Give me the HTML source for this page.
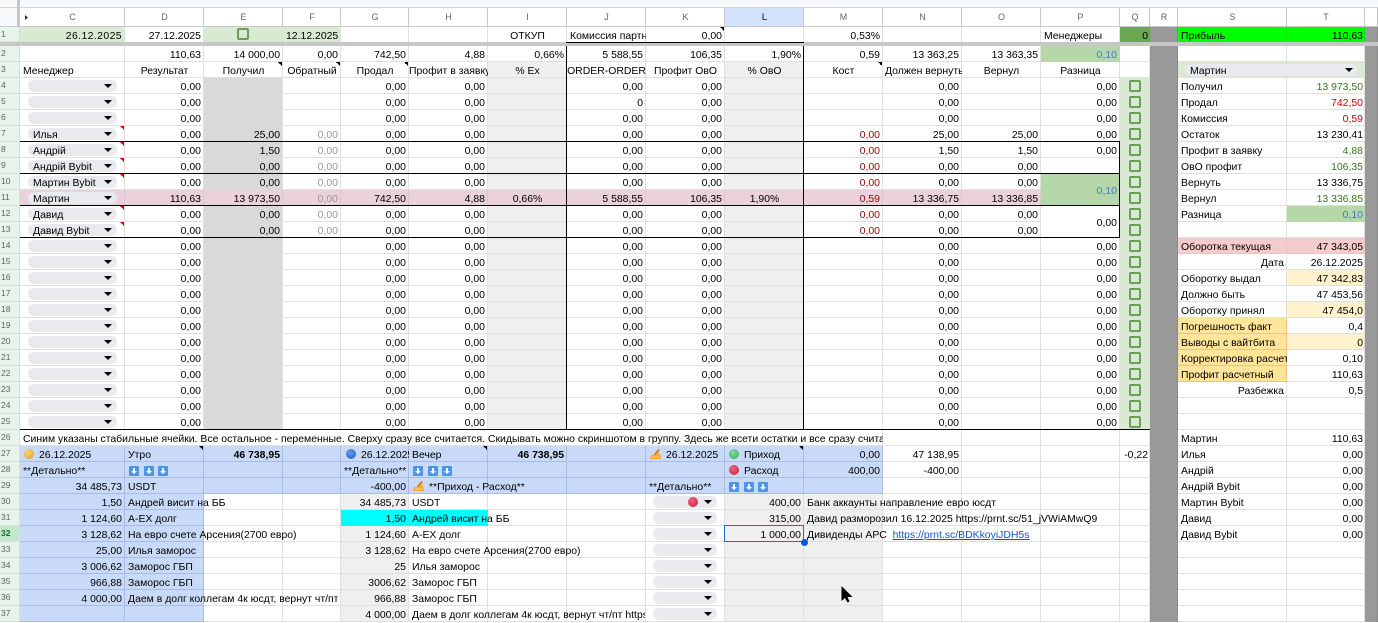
<!DOCTYPE html>
<html><head><meta charset="utf-8"><title>Sheet</title>
<style>
html,body{margin:0;padding:0;width:1378px;height:623px;overflow:hidden;background:#fff}
body{position:relative;font:10.45px/12px "Liberation Sans","Noto Sans CJK SC",sans-serif;color:#000}
table{position:absolute;left:0;top:8px;width:1378px;border-collapse:separate;border-spacing:0;table-layout:fixed}
td{padding:4px 3px 0 3px;height:16px;box-sizing:border-box;text-align:right;white-space:nowrap;line-height:12px;box-shadow:inset -1px -1px 0 #e0e0e0;background-repeat:no-repeat;background-position:top right;vertical-align:top}
td:nth-last-child(2),.q0{padding-right:2px}
.hd td{height:19px;padding:0;line-height:18px;text-align:center;font-size:9px;color:#5f6368;box-shadow:inset -1px -1px 0 #c7c7c7}
.hd td.sel{background-color:#d3e3fd;color:#0b57d0;font-weight:bold}
.a td{height:15px;box-shadow:inset -1px 0 0 #e0e0e0;padding-top:4px;line-height:11px}
.bar td{height:4px;padding:0;line-height:0;font-size:0;background:#c7c7c7;box-shadow:none}
td.n{background-color:#e6f4ea;color:#5f6368;font-size:8.5px;text-align:left;padding:0 0 0 1px;line-height:14px;box-shadow:inset -1px -1px 0 #d6e0da}
td.ns{background-color:#c2e7cd;font-weight:bold;color:#146c2e}
.l{text-align:left}.c{text-align:center}.h{overflow:hidden}
.g{background-color:#d9d9d9;box-shadow:inset -1px 0 0 #e0e0e0}
.e{background-color:#efefef}
.f{color:#999}.m{color:#990000}
td.r{background-color:#999;box-shadow:inset -1px 0 0 #8a8a8a}
.q{background-color:#d9ead3;position:relative}
.p{position:relative}
.t{background-image:linear-gradient(225deg,#000 50%,transparent 50%);background-size:5px 5px}
.x{background-image:linear-gradient(225deg,#cc0000 50%,transparent 50%);background-size:5px 5px}
.pi{background-color:#ead1dc;box-shadow:inset -1px -1px 0 #ddc5d0}
.b{background-color:#c9daf8;box-shadow:inset -1px -1px 0 #a9bce3}
.lg{background-color:#d9ead3}
.gr{background-color:#b6d7a8;box-shadow:inset -1px -1px 0 #b6d7a8}
.bl{color:#3c78d8}
.gt{color:#38761d}
.rd{color:#cc0000}
.pk{background-color:#f4cccc;box-shadow:inset -1px -1px 0 #ecc4c4}
.ye{background-color:#fff2cc}
.or{background-color:#ffe599;box-shadow:inset -1px -1px 0 #f1c27d}
.cy{background-color:#00ffff}
.a td.gn{background-color:#6aa84f;box-shadow:none}
.a td.li{background-color:#00ff00;box-shadow:inset -1px 0 0 #11e611}
i.d{position:absolute;left:8px;top:2px;width:89px;height:12px;border-radius:6px;background:#e8eaed;font-style:normal;text-align:left;line-height:15px;padding-left:5px;box-sizing:border-box}
i.d:after{content:"";position:absolute;right:5px;top:4px;border:4px solid transparent;border-top:4px solid #000;border-bottom:0}
i.k{position:absolute;left:9px;top:2px;width:12px;height:12px;box-sizing:border-box;border:2px solid #6b9e56;border-radius:2px}
i.o{display:inline-block;width:10px;height:10px;border-radius:50%;vertical-align:top;position:relative;top:-1px;margin:0 5px 0 1px}
.oy{background:radial-gradient(circle at 40% 35%,#fcd96b,#d9952f)}
.ob{background:radial-gradient(circle at 40% 35%,#5d9df0,#1f5fbf)}
.og{background:radial-gradient(circle at 40% 35%,#86dfa0,#2fa55a)}
.or2{background:radial-gradient(circle at 40% 35%,#f2607e,#c81e3c)}
svg.ar{vertical-align:top;margin-left:1px}
svg.hn{vertical-align:top;position:relative;top:-1px;margin:0 5px 0 1px}
.ln{position:absolute;background:#000}
u{color:#1155cc}
</style></head><body>
<div style="position:absolute;left:0;top:0;width:1378px;height:7px;background:#f8f9fa"></div>
<div style="position:absolute;left:0;top:7px;width:1378px;height:1px;background:#d4d4d4"></div>
<table>
<colgroup><col style="width:20px"><col style="width:105px"><col style="width:79px"><col style="width:79px"><col style="width:58px"><col style="width:68px"><col style="width:79px"><col style="width:79px"><col style="width:79px"><col style="width:79px"><col style="width:79px"><col style="width:79px"><col style="width:79px"><col style="width:79px"><col style="width:79px"><col style="width:30px"><col style="width:28px"><col style="width:109px"><col style="width:78px"><col style="width:13px"></colgroup>
<tr class="hd"><td style="background:#f8f9fa"></td><td>C</td><td>D</td><td>E</td><td>F</td><td>G</td><td>H</td><td>I</td><td>J</td><td>K</td><td class="sel">L</td><td>M</td><td>N</td><td>O</td><td>P</td><td>Q</td><td>R</td><td>S</td><td>T</td><td></td></tr>
<tr class="a"><td class="n">1</td><td class="lg" style="letter-spacing:.4px">26.12.2025</td><td>27.12.2025</td><td class="lg p"><i class="k" style="left:33px;top:1px"></i></td><td class="lg">12.12.2025</td><td></td><td></td><td class="c">ОТКУП</td><td class="l h">Комиссия партнера</td><td class="t">0,00</td><td></td><td>0,53%</td><td></td><td></td><td class="l">Менеджеры</td><td class="gn q0">0</td><td class="r"></td><td class="l li">Прибыль</td><td class="li">110,63</td><td class="r"></td></tr>
<tr class="bar"><td colspan="20"></td></tr>
<tr><td class="n">2</td><td></td><td>110,63</td><td>14 000,00</td><td>0,00</td><td>742,50</td><td>4,88</td><td>0,66%</td><td>5 588,55</td><td>106,35</td><td>1,90%</td><td>0,59</td><td>13 363,25</td><td>13 363,35</td><td class="gr bl">0,10</td><td></td><td class="r"></td><td></td><td></td><td class="r"></td></tr>
<tr><td class="n">3</td><td class="l">Менеджер</td><td class="c">Результат</td><td class="c t">Получил</td><td class="c t h" style="padding:4px 0 0">Обратный</td><td class="c t">Продал</td><td class="c h" style="padding:4px 0 0">Профит в заявку</td><td class="c e">% Ex</td><td class="c h" style="padding:4px 0 0">ORDER-ORDER</td><td class="c">Профит ОвО</td><td class="c e">% ОвО</td><td class="c t">Кост</td><td class="c h" style="padding:4px 0 0 2px">Должен вернуть</td><td class="c">Вернул</td><td class="c">Разница</td><td></td><td class="r"></td><td colspan="2" class="lg p"><i class="d" style="left:7px;width:173px;text-align:left;padding-left:5px">Мартин</i></td><td class="r"></td></tr>
<tr><td class="n">4</td><td class="p"><i class="d"></i></td><td>0,00</td><td class="g"></td><td></td><td>0,00</td><td>0,00</td><td class="e"></td><td>0,00</td><td>0,00</td><td class="e"></td><td></td><td>0,00</td><td></td><td>0,00</td><td class="q"><i class="k"></i></td><td class="r"></td><td class="l">Получил</td><td class="gt">13 973,50</td><td class="r"></td></tr>
<tr><td class="n">5</td><td class="p"><i class="d"></i></td><td>0,00</td><td class="g"></td><td></td><td>0,00</td><td>0,00</td><td class="e"></td><td>0</td><td>0,00</td><td class="e"></td><td></td><td>0,00</td><td></td><td>0,00</td><td class="q"><i class="k"></i></td><td class="r"></td><td class="l">Продал</td><td class="rd">742,50</td><td class="r"></td></tr>
<tr><td class="n">6</td><td class="p"><i class="d"></i></td><td>0,00</td><td class="g"></td><td></td><td>0,00</td><td>0,00</td><td class="e"></td><td>0,00</td><td>0,00</td><td class="e"></td><td></td><td>0,00</td><td></td><td>0,00</td><td class="q"><i class="k"></i></td><td class="r"></td><td class="l">Комиссия</td><td class="rd">0,59</td><td class="r"></td></tr>
<tr><td class="n">7</td><td class="p x"><i class="d">Илья</i></td><td>0,00</td><td class="g">25,00</td><td class="f">0,00</td><td>0,00</td><td>0,00</td><td class="e"></td><td>0,00</td><td>0,00</td><td class="e"></td><td class="m">0,00</td><td>25,00</td><td>25,00</td><td>0,00</td><td class="q"><i class="k"></i></td><td class="r"></td><td class="l">Остаток</td><td>13 230,41</td><td class="r"></td></tr>
<tr><td class="n">8</td><td class="p x"><i class="d">Андрій</i></td><td>0,00</td><td class="g">1,50</td><td class="f">0,00</td><td>0,00</td><td>0,00</td><td class="e"></td><td>0,00</td><td>0,00</td><td class="e"></td><td class="m">0,00</td><td>1,50</td><td>1,50</td><td>0,00</td><td class="q"><i class="k"></i></td><td class="r"></td><td class="l">Профит в заявку</td><td class="gt">4,88</td><td class="r"></td></tr>
<tr><td class="n">9</td><td class="p x"><i class="d">Андрій Bybit</i></td><td>0,00</td><td class="g">0,00</td><td class="f">0,00</td><td>0,00</td><td>0,00</td><td class="e"></td><td>0,00</td><td>0,00</td><td class="e"></td><td class="m">0,00</td><td>0,00</td><td>0,00</td><td></td><td class="q"><i class="k"></i></td><td class="r"></td><td class="l">ОвО профит</td><td class="gt">106,35</td><td class="r"></td></tr>
<tr><td class="n">10</td><td class="p x"><i class="d">Мартин Bybit</i></td><td>0,00</td><td class="g">0,00</td><td class="f">0,00</td><td>0,00</td><td>0,00</td><td class="e"></td><td>0,00</td><td>0,00</td><td class="e"></td><td class="m">0,00</td><td>0,00</td><td>0,00</td><td rowspan="2" class="gr bl" style="vertical-align:middle">0,10</td><td class="q"><i class="k"></i></td><td class="r"></td><td class="l">Вернуть</td><td>13 336,75</td><td class="r"></td></tr>
<tr><td class="n">11</td><td class="p pi"><i class="d">Мартин</i></td><td class="pi">110,63</td><td class="pi">13 973,50</td><td class="pi f">0,00</td><td class="pi">742,50</td><td class="pi">4,88</td><td class="pi c">0,66%</td><td class="pi">5 588,55</td><td class="pi">106,35</td><td class="pi c">1,90%</td><td class="pi m">0,59</td><td class="pi">13 336,75</td><td class="pi">13 336,85</td><td class="q"><i class="k"></i></td><td class="r"></td><td class="l">Вернул</td><td class="gt">13 336,85</td><td class="r"></td></tr>
<tr><td class="n">12</td><td class="p x"><i class="d">Давид</i></td><td>0,00</td><td class="g">0,00</td><td class="f">0,00</td><td>0,00</td><td>0,00</td><td class="e"></td><td>0,00</td><td>0,00</td><td class="e"></td><td class="m">0,00</td><td>0,00</td><td>0,00</td><td rowspan="2" style="vertical-align:middle">0,00</td><td class="q"><i class="k"></i></td><td class="r"></td><td class="l">Разница</td><td class="gr bl">0,10</td><td class="r"></td></tr>
<tr><td class="n">13</td><td class="p x"><i class="d">Давид Bybit</i></td><td>0,00</td><td class="g">0,00</td><td class="f">0,00</td><td>0,00</td><td>0,00</td><td class="e"></td><td>0,00</td><td>0,00</td><td class="e"></td><td class="m">0,00</td><td>0,00</td><td>0,00</td><td class="q"><i class="k"></i></td><td class="r"></td><td></td><td></td><td class="r"></td></tr>
<tr><td class="n">14</td><td class="p"><i class="d"></i></td><td>0,00</td><td class="g"></td><td></td><td>0,00</td><td>0,00</td><td class="e"></td><td>0,00</td><td>0,00</td><td class="e"></td><td></td><td>0,00</td><td></td><td>0,00</td><td class="q"><i class="k"></i></td><td class="r"></td><td class="l pk">Оборотка текущая</td><td class="pk">47 343,05</td><td class="r"></td></tr>
<tr><td class="n">15</td><td class="p"><i class="d"></i></td><td>0,00</td><td class="g"></td><td></td><td>0,00</td><td>0,00</td><td class="e"></td><td>0,00</td><td>0,00</td><td class="e"></td><td></td><td>0,00</td><td></td><td>0,00</td><td class="q"><i class="k"></i></td><td class="r"></td><td>Дата</td><td>26.12.2025</td><td class="r"></td></tr>
<tr><td class="n">16</td><td class="p"><i class="d"></i></td><td>0,00</td><td class="g"></td><td></td><td>0,00</td><td>0,00</td><td class="e"></td><td>0,00</td><td>0,00</td><td class="e"></td><td></td><td>0,00</td><td></td><td>0,00</td><td class="q"><i class="k"></i></td><td class="r"></td><td class="l">Оборотку выдал</td><td class="ye">47 342,83</td><td class="r"></td></tr>
<tr><td class="n">17</td><td class="p"><i class="d"></i></td><td>0,00</td><td class="g"></td><td></td><td>0,00</td><td>0,00</td><td class="e"></td><td>0,00</td><td>0,00</td><td class="e"></td><td></td><td>0,00</td><td></td><td>0,00</td><td class="q"><i class="k"></i></td><td class="r"></td><td class="l">Должно быть</td><td>47 453,56</td><td class="r"></td></tr>
<tr><td class="n">18</td><td class="p"><i class="d"></i></td><td>0,00</td><td class="g"></td><td></td><td>0,00</td><td>0,00</td><td class="e"></td><td>0,00</td><td>0,00</td><td class="e"></td><td></td><td>0,00</td><td></td><td>0,00</td><td class="q"><i class="k"></i></td><td class="r"></td><td class="l">Оборотку принял</td><td class="ye">47 454,0</td><td class="r"></td></tr>
<tr><td class="n">19</td><td class="p"><i class="d"></i></td><td>0,00</td><td class="g"></td><td></td><td>0,00</td><td>0,00</td><td class="e"></td><td>0,00</td><td>0,00</td><td class="e"></td><td></td><td>0,00</td><td></td><td>0,00</td><td class="q"><i class="k"></i></td><td class="r"></td><td class="l or">Погрешность факт</td><td>0,4</td><td class="r"></td></tr>
<tr><td class="n">20</td><td class="p"><i class="d"></i></td><td>0,00</td><td class="g"></td><td></td><td>0,00</td><td>0,00</td><td class="e"></td><td>0,00</td><td>0,00</td><td class="e"></td><td></td><td>0,00</td><td></td><td>0,00</td><td class="q"><i class="k"></i></td><td class="r"></td><td class="l or">Выводы с вайтбита</td><td class="ye">0</td><td class="r"></td></tr>
<tr><td class="n">21</td><td class="p"><i class="d"></i></td><td>0,00</td><td class="g"></td><td></td><td>0,00</td><td>0,00</td><td class="e"></td><td>0,00</td><td>0,00</td><td class="e"></td><td></td><td>0,00</td><td></td><td>0,00</td><td class="q"><i class="k"></i></td><td class="r"></td><td class="l or h">Корректировка расчетная</td><td>0,10</td><td class="r"></td></tr>
<tr><td class="n">22</td><td class="p"><i class="d"></i></td><td>0,00</td><td class="g"></td><td></td><td>0,00</td><td>0,00</td><td class="e"></td><td>0,00</td><td>0,00</td><td class="e"></td><td></td><td>0,00</td><td></td><td>0,00</td><td class="q"><i class="k"></i></td><td class="r"></td><td class="l or">Профит расчетный</td><td>110,63</td><td class="r"></td></tr>
<tr><td class="n">23</td><td class="p"><i class="d"></i></td><td>0,00</td><td class="g"></td><td></td><td>0,00</td><td>0,00</td><td class="e"></td><td>0,00</td><td>0,00</td><td class="e"></td><td></td><td>0,00</td><td></td><td>0,00</td><td class="q"><i class="k"></i></td><td class="r"></td><td>Разбежка</td><td>0,5</td><td class="r"></td></tr>
<tr><td class="n">24</td><td class="p"><i class="d"></i></td><td>0,00</td><td class="g"></td><td></td><td>0,00</td><td>0,00</td><td class="e"></td><td>0,00</td><td>0,00</td><td class="e"></td><td></td><td>0,00</td><td></td><td>0,00</td><td class="q"><i class="k"></i></td><td class="r"></td><td></td><td></td><td class="r"></td></tr>
<tr><td class="n">25</td><td class="p"><i class="d"></i></td><td>0,00</td><td class="g"></td><td></td><td>0,00</td><td>0,00</td><td class="e"></td><td>0,00</td><td>0,00</td><td class="e"></td><td></td><td>0,00</td><td></td><td>0,00</td><td class="q"><i class="k"></i></td><td class="r"></td><td></td><td></td><td class="r"></td></tr>
<tr><td class="n">26</td><td colspan="11" class="l h">Синим указаны стабильные ячейки. Все остальное - переменные. Сверху сразу все считается. Скидывать можно скриншотом в группу. Здесь же всети остатки и все сразу считается</td><td></td><td></td><td></td><td></td><td class="r"></td><td class="l">Мартин</td><td>110,63</td><td class="r"></td></tr>
<tr><td class="n">27</td><td class="l b"><i class="o oy"></i>26.12.2025</td><td class="l b t">Утро</td><td class="b"><b>46 738,95</b></td><td class="b"></td><td class="l b h"><i class="o ob" style="margin:0 5px 0 2px"></i>26.12.2025</td><td class="l b t">Вечер</td><td class="b"><b>46 738,95</b></td><td class="b"></td><td class="l b"><svg class="hn" width="11" height="10" viewBox="0 0 11 10"><path d="M0 10L1 6.5 4 5 6 2 9 0 10 1 8.5 4.5 10.5 5.5 11 10Z" fill="#f7a93b"/><path d="M9 0.5L5 5.5" stroke="#c9661f" stroke-width="1.2" fill="none"/><path d="M2 8h7" stroke="#fbd27a" stroke-width="1" fill="none"/></svg>26.12.2025</td><td class="l b t"><i class="o og"></i>Приход</td><td class="b">0,00</td><td>47 138,95</td><td></td><td></td><td class="q0">-0,22</td><td class="r"></td><td class="l">Илья</td><td>0,00</td><td class="r"></td></tr>
<tr><td class="n">28</td><td class="l b">**Детально**</td><td class="l b"><svg class="ar" width="40" height="10" viewBox="0 0 40 10"><g fill="#4a96ea"><rect width="10" height="10" rx="1"/><rect x="15" width="10" height="10" rx="1"/><rect x="29" width="10" height="10" rx="1"/></g><g fill="#fff"><path d="M4 2h2v3h2L5 8 2 5h2z"/><path d="M19 2h2v3h2l-3 3-3-3h2z"/><path d="M33 2h2v3h2l-3 3-3-3h2z"/></g></svg></td><td class="b"></td><td class="b"></td><td class="l b">**Детально**</td><td class="l b"><svg class="ar" width="40" height="10" viewBox="0 0 40 10"><g fill="#4a96ea"><rect width="10" height="10" rx="1"/><rect x="15" width="10" height="10" rx="1"/><rect x="29" width="10" height="10" rx="1"/></g><g fill="#fff"><path d="M4 2h2v3h2L5 8 2 5h2z"/><path d="M19 2h2v3h2l-3 3-3-3h2z"/><path d="M33 2h2v3h2l-3 3-3-3h2z"/></g></svg></td><td class="b"></td><td class="b"></td><td class="b"></td><td class="l b"><i class="o or2"></i>Расход</td><td class="b">400,00</td><td>-400,00</td><td></td><td></td><td></td><td class="r"></td><td class="l">Андрій</td><td>0,00</td><td class="r"></td></tr>
<tr><td class="n">29</td><td class="b">34 485,73</td><td class="l b">USDT</td><td class="b"></td><td class="b"></td><td class="b">-400,00</td><td class="l b"><svg class="hn" width="11" height="10" viewBox="0 0 11 10"><path d="M0 10L1 6.5 4 5 6 2 9 0 10 1 8.5 4.5 10.5 5.5 11 10Z" fill="#f7a93b"/><path d="M9 0.5L5 5.5" stroke="#c9661f" stroke-width="1.2" fill="none"/><path d="M2 8h7" stroke="#fbd27a" stroke-width="1" fill="none"/></svg>**Приход - Расход**</td><td class="b"></td><td class="b"></td><td class="l b">**Детально**</td><td class="l b"><svg class="ar" width="40" height="10" viewBox="0 0 40 10"><g fill="#4a96ea"><rect width="10" height="10" rx="1"/><rect x="15" width="10" height="10" rx="1"/><rect x="29" width="10" height="10" rx="1"/></g><g fill="#fff"><path d="M4 2h2v3h2L5 8 2 5h2z"/><path d="M19 2h2v3h2l-3 3-3-3h2z"/><path d="M33 2h2v3h2l-3 3-3-3h2z"/></g></svg></td><td class="b"></td><td></td><td></td><td></td><td></td><td class="r"></td><td class="l">Андрій Bybit</td><td>0,00</td><td class="r"></td></tr>
<tr><td class="n">30</td><td class="b">1,50</td><td class="l b">Андрей висит на ББ</td><td></td><td></td><td class="e">34 485,73</td><td class="l">USDT</td><td></td><td></td><td class="p"><i class="d" style="left:7px;width:64px"><i class="o or2" style="position:absolute;left:35px;top:1px;margin:0"></i></i></td><td class="e">400,00</td><td class="l e">Банк аккаунты направление евро юсдт</td><td></td><td></td><td></td><td></td><td class="r"></td><td class="l">Мартин Bybit</td><td>0,00</td><td class="r"></td></tr>
<tr><td class="n">31</td><td class="b">1 124,60</td><td class="l b">A-EX долг</td><td></td><td></td><td class="cy" style="box-shadow:none">1,50</td><td class="l cy" style="box-shadow:none">Андрей висит на ББ</td><td></td><td></td><td class="p"><i class="d" style="left:7px;width:64px"></i></td><td class="e">315,00</td><td class="l e">Давид разморозил 16.12.2025 https://prnt.sc/51_jVWiAMwQ9</td><td></td><td></td><td></td><td></td><td class="r"></td><td class="l">Давид</td><td>0,00</td><td class="r"></td></tr>
<tr><td class="n ns">32</td><td class="b">3 128,62</td><td class="l b">На евро счете Арсения(2700 евро)</td><td></td><td></td><td class="e">1 124,60</td><td class="l">A-EX долг</td><td></td><td></td><td class="p"><i class="d" style="left:7px;width:64px"></i></td><td class="e">1 000,00</td><td class="l e">Дивиденды АРС &nbsp;<u>https://prnt.sc/BDKkoyiJDH5s</u></td><td></td><td></td><td></td><td></td><td class="r"></td><td class="l">Давид Bybit</td><td>0,00</td><td class="r"></td></tr>
<tr><td class="n">33</td><td class="b">25,00</td><td class="l b">Илья заморос</td><td></td><td></td><td class="e">3 128,62</td><td class="l">На евро счете Арсения(2700 евро)</td><td></td><td></td><td class="p"><i class="d" style="left:7px;width:64px"></i></td><td class="e"></td><td class="e"></td><td></td><td></td><td></td><td></td><td class="r"></td><td></td><td></td><td class="r"></td></tr>
<tr><td class="n">34</td><td class="b">3 006,62</td><td class="l b">Заморос ГБП</td><td></td><td></td><td class="e">25</td><td class="l">Илья заморос</td><td></td><td></td><td class="p"><i class="d" style="left:7px;width:64px"></i></td><td class="e"></td><td class="e"></td><td></td><td></td><td></td><td></td><td class="r"></td><td></td><td></td><td class="r"></td></tr>
<tr><td class="n">35</td><td class="b">966,88</td><td class="l b">Заморос ГБП</td><td></td><td></td><td class="e">3006,62</td><td class="l">Заморос ГБП</td><td></td><td></td><td class="p"><i class="d" style="left:7px;width:64px"></i></td><td class="e"></td><td class="e"></td><td></td><td></td><td></td><td></td><td class="r"></td><td></td><td></td><td class="r"></td></tr>
<tr><td class="n">36</td><td class="b">4 000,00</td><td class="l b"><div class="h" style="width:210px">Даем в долг коллегам 4к юсдт, вернут чт/пт</div></td><td></td><td></td><td class="e">966,88</td><td class="l">Заморос ГБП</td><td></td><td></td><td class="p"><i class="d" style="left:7px;width:64px"></i></td><td class="e"></td><td class="e"></td><td></td><td></td><td></td><td></td><td class="r"></td><td></td><td></td><td class="r"></td></tr>
<tr><td class="n">37</td><td class="b"></td><td class="b"></td><td></td><td></td><td class="e">4 000,00</td><td class="l"><div class="h" style="width:233px">Даем в долг коллегам 4к юсдт, вернут чт/пт https://prnt.sc</div></td><td></td><td></td><td class="p"><i class="d" style="left:7px;width:64px"></i></td><td class="e"></td><td class="e"></td><td></td><td></td><td></td><td></td><td class="r"></td><td></td><td></td><td class="r"></td></tr>
</table>
<div style="position:absolute;left:17px;top:0;width:3px;height:26px;background:#c7c7c7"></div>
<svg style="position:absolute;left:25px;top:15px" width="3" height="5"><path d="M0 0L3 2.5 0 5Z" fill="#333"/></svg>
<div class="ln" style="left:566px;top:42px;width:238px;height:1px"></div>
<div class="ln" style="left:566px;top:46px;width:1px;height:384px"></div>
<div class="ln" style="left:803px;top:46px;width:1px;height:384px"></div>
<div class="ln" style="left:20px;top:141px;width:1100px;height:1px"></div>
<div class="ln" style="left:20px;top:173px;width:1100px;height:1px"></div>
<div class="ln" style="left:20px;top:205px;width:1100px;height:1px"></div>
<div class="ln" style="left:20px;top:237px;width:1100px;height:1px"></div>
<div class="ln" style="left:20px;top:429px;width:1130px;height:1px"></div>
<div class="ln" style="left:1119px;top:141px;width:1px;height:97px"></div>
<div style="position:absolute;left:724px;top:525px;width:80px;height:17px;box-sizing:border-box;border:1px solid #1a6fdc"></div>
<div style="position:absolute;left:801px;top:539px;width:7px;height:7px;border-radius:50%;background:#0b57d0"></div>
<svg style="position:absolute;left:841px;top:586px" width="12" height="17" viewBox="0 0 12 17"><path d="M0.5 0L0.5 15 4 12 6.5 16.5 8.5 15.5 6.5 11 11.5 11Z" fill="#000"/></svg>
</body></html>
